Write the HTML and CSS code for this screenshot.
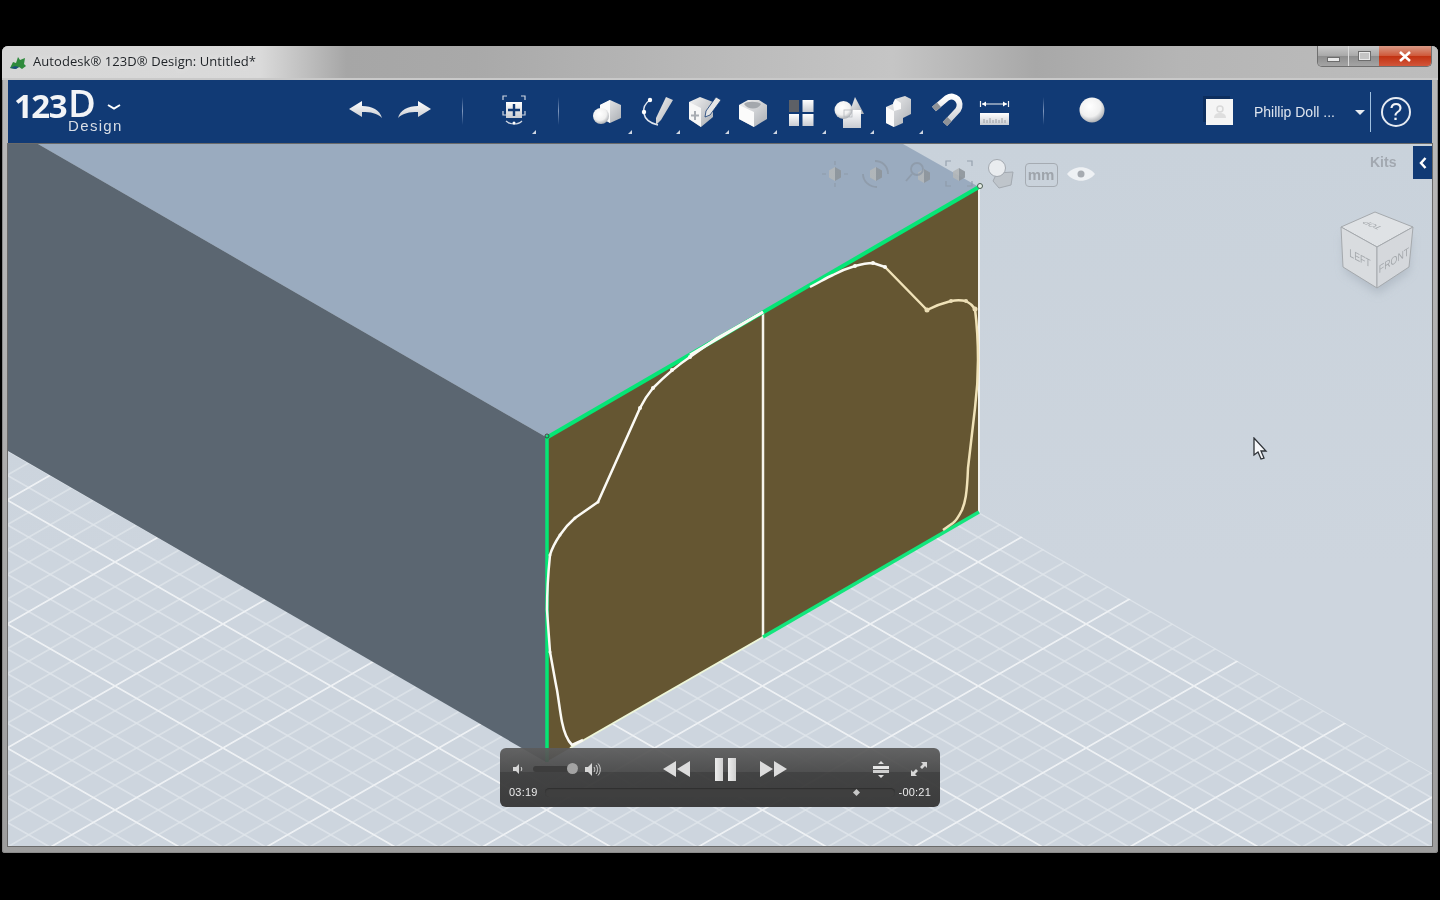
FILE: index.html
```html
<!DOCTYPE html>
<html lang="en">
<head>
    <meta charset="UTF-8">
    <meta name="viewport" content="width=device-width, initial-scale=1.0">
    <title>Autodesk 123D Design</title>
    <link rel="stylesheet" href="styles.css">
</head>
<body>

    <!-- shared gradients for the toolbar icons -->
    <svg class="defs" aria-hidden="true">
        <defs>
            <linearGradient id="lit" x1="0" y1="0" x2="0" y2="1">
                <stop offset="0" stop-color="#ffffff"/>
                <stop offset="1" stop-color="#c9ccd2"/>
            </linearGradient>
            <linearGradient id="shade" x1="0" y1="0" x2="1" y2="1">
                <stop offset="0" stop-color="#f4f4f4"/>
                <stop offset="1" stop-color="#a9adb3"/>
            </linearGradient>
            <radialGradient id="ball" cx="0.42" cy="0.35" r="0.7">
                <stop offset="0" stop-color="#ffffff"/>
                <stop offset="0.6" stop-color="#f0f0f0"/>
                <stop offset="1" stop-color="#9fa3a9"/>
            </radialGradient>
            <linearGradient id="hex" x1="0" y1="0" x2="1" y2="0">
                <stop offset="0.5" stop-color="#b3b7b9"/>
                <stop offset="0.5" stop-color="#8e959b"/>
            </linearGradient>
            <filter id="soft" x="-30%" y="-30%" width="160%" height="160%">
                <feGaussianBlur stdDeviation="5"/>
            </filter>
            <pattern id="floor" width="100" height="100" patternUnits="userSpaceOnUse" patternTransform="matrix(1.079 .62 1.079 -.62 115 562)">
                <path d="M20 0V100M40 0V100M60 0V100M80 0V100M0 20H100M0 40H100M0 60H100M0 80H100" stroke="#e6ebef" stroke-opacity=".8" stroke-width="1.100" fill="none"/>
                <path d="M0 0H100M0 100H100M0 0V100M100 0V100" stroke="#eef1f4" stroke-width="1.600" fill="none"/>
            </pattern>
        </defs>
    </svg>

    <div class="window">
        <div class="titlebar">
            <svg class="app-icon" width="18" height="16" viewBox="0 0 18 16">
                <path d="M1 14l3-6 3 1 2-6 2 3 5-2-1 6 2 2-4 3-3-2-4 2z" fill="#2f8a3c"/>
                <path d="M1 14l5-2 4 1-3 2z" fill="#1d4f7d"/>
            </svg>
            <span class="app-title">Autodesk® 123D® Design: Untitled*</span>
            <div class="win-buttons">
                <div class="win-btn win-min"><span class="min-glyph"></span></div>
                <div class="win-btn win-max"><span class="max-glyph"></span></div>
                <div class="win-btn win-close">
                    <svg width="14" height="11" viewBox="0 0 14 11"><path d="M2 1l10 9M12 1L2 10" stroke="#fff" stroke-width="2.6" fill="none"/></svg>
                </div>
            </div>
        </div>

        <div class="toolbar">
            <div class="logo">
                <span class="logo-num">123</span>
                <div class="logo-right">
                    <div class="logo-top">
                        <span class="logo-d">D</span>
                        <svg class="logo-chevron" width="16" height="8" viewBox="0 0 16 8"><path d="M2 2l6 3.5L14 2" stroke="#fff" stroke-width="2" fill="none"/></svg>
                    </div>
                    <span class="logo-sub">Design</span>
                </div>
            </div>

            <div class="tool history first-history">
                <svg width="36" height="24" viewBox="0 0 36 24"><path d="M1 11L14 3v5c10 0 18 4 20 12-5-5-11-6-20-6v5z" fill="url(#lit)"/></svg>
            </div>
            <div class="tool history">
                <svg width="36" height="24" viewBox="0 0 36 24"><path d="M35 11L22 3v5C12 8 4 12 2 20c5-5 11-6 20-6v5z" fill="url(#lit)"/></svg>
            </div>
            <span class="sep sep-a"></span>

            <div class="tool select-tool more">
                <svg width="36" height="36" viewBox="0 0 36 36">
                    <path d="M9 8V4h4M27 4h4v4M9 19v4h3M31 19v4h-3" stroke="#cfd6e2" stroke-width="1.2" fill="none"/>
                    <path d="M12 10h16v16H12z" fill="url(#lit)"/>
                    <path d="M20 12v12M14 18h12" stroke="#123a74" stroke-width="2.4"/>
                    <path d="M12 29c4 4 12 4 16 0" stroke="#cfd6e2" stroke-width="1.2" fill="none"/>
                    <circle cx="20" cy="31" r="1.5" fill="#fff"/>
                </svg>
            </div>
            <span class="sep sep-b"></span>

            <div class="tools">
                <div class="tool more">
                    <svg width="36" height="36" viewBox="0 0 36 36">
                        <path d="M21 8l11 5v13l-11 5-10-6V13z" fill="url(#shade)"/>
                        <path d="M11 13l10-5 0 23-10-6z" fill="#fafafa"/>
                        <circle cx="12" cy="24" r="8" fill="url(#ball)"/>
                    </svg>
                </div>
                <div class="tool more">
                    <svg width="36" height="36" viewBox="0 0 36 36">
                        <path d="M12 8C3 14 2 29 20 33" stroke="#dfe6f0" stroke-width="1.5" fill="none"/>
                        <circle cx="12" cy="8" r="2.2" fill="#fff"/>
                        <circle cx="6" cy="20" r="2.2" fill="#fff"/>
                        <path d="M28 5l7 3-12 20-5 5 0-7z" fill="url(#shade)"/>
                    </svg>
                </div>
                <div class="tool more">
                    <svg width="36" height="36" viewBox="0 0 36 36">
                        <path d="M3 10L14 5l13 5v15l-12 10-12-8z" fill="url(#shade)"/>
                        <path d="M3 10l12 6v19l-12-8z" fill="#f7f7f7"/>
                        <path d="M9 19v9M5 23.5h8" stroke="#a9adb3" stroke-width="2"/>
                        <path d="M30 5l5 3-11 15-5 2 1-6z" fill="#e6e6e6" stroke="#123a74" stroke-width=".8"/>
                    </svg>
                </div>
                <div class="tool more">
                    <svg width="36" height="36" viewBox="0 0 36 36">
                        <path d="M4 13l9-5h11l8 5v14l-13 8-15-8z" fill="url(#shade)"/>
                        <path d="M4 13l15 7v15L4 27z" fill="#fbfbfb"/>
                        <path d="M9 12c2-3 14-3 17 0-3 6-13 6-17 0z" fill="#a4a8ad"/>
                    </svg>
                </div>
                <div class="tool more">
                    <svg width="36" height="36" viewBox="0 0 36 36">
                        <rect x="6" y="8" width="10" height="12" fill="#5d6066"/>
                        <rect x="19.5" y="8" width="11" height="12" fill="url(#lit)"/>
                        <rect x="6" y="22" width="10" height="12" fill="url(#lit)"/>
                        <rect x="19.5" y="22" width="11" height="12" fill="url(#lit)"/>
                    </svg>
                </div>
                <div class="tool more">
                    <svg width="36" height="36" viewBox="0 0 36 36">
                        <path d="M23 5l9 17H17z" fill="url(#shade)"/>
                        <rect x="11" y="18" width="18" height="18" fill="url(#lit)"/>
                        <circle cx="11.5" cy="18" r="9" fill="url(#ball)"/>
                        <rect x="12" y="18" width="8" height="7" fill="none" stroke="#b5b8bd" stroke-width=".8"/>
                    </svg>
                </div>
                <div class="tool more">
                    <svg width="36" height="36" viewBox="0 0 36 36">
                        <path d="M6 15l9-4V7l10-3 6 3v15l-8 4v5l-9 4-8-4z" fill="url(#shade)"/>
                        <path d="M6 15l8 4v16l-8-4zM15 7l6 4v6l-7 2-1-8z" fill="#fbfbfb"/>
                    </svg>
                </div>
                <div class="tool">
                    <svg width="36" height="36" viewBox="0 0 36 36">
                        <g transform="translate(-2 0)">
                            <path d="M7 17L20 6c8-5 16 4 11 12L18 32" stroke="url(#lit)" stroke-width="6" fill="none"/>
                            <path d="M7 17l5-4.200M18 32l4.500-4.900" stroke="#8f9297" stroke-width="6" fill="none"/>
                        </g>
                    </svg>
                </div>
                <div class="tool">
                    <svg width="36" height="36" viewBox="0 0 36 36">
                        <path d="M3.500 9v6M31.500 9v6M5 12h25" stroke="#f2f2f2" stroke-width="1.200" fill="none"/>
                        <path d="M5 12l4-2.500v5zM30 12l-4-2.500v5z" fill="#fff"/>
                        <rect x="3" y="21" width="29" height="12" fill="url(#lit)"/>
                        <path d="M7 31v-4M10 31v-3M13 31v-5M16 31v-3M19 31v-4M22 31v-3M25 31v-5M28 31v-3" stroke="#8d9096" stroke-width=".8"/>
                    </svg>
                </div>
            </div>
            <span class="sep sep-c"></span>

            <div class="tool material">
                <svg width="36" height="36" viewBox="0 0 36 36"><circle cx="18" cy="18" r="12.500" fill="url(#ball)"/></svg>
            </div>

            <div class="account">
                <div class="avatar">
                    <svg width="18" height="18" viewBox="0 0 18 18">
                        <circle cx="9" cy="6" r="3" fill="none" stroke="#d9d9d9" stroke-width="1.500"/>
                        <path d="M3 15c0-4 3-5 6-5s6 1 6 5z" fill="#dedede"/>
                    </svg>
                </div>
                <span class="user-name">Phillip Doll ...</span>
                <span class="caret"></span>
                <span class="sep-user"></span>
                <div class="help">?</div>
            </div>
        </div>

        <div class="viewport">
            <svg class="scene" viewBox="8 144 1424 703" width="1424" height="703">
                <path d="M8 451L546 762 979 512 1432 773V847H8z" fill="url(#floor)"/>
                <path d="M38 144L546 437 979 187 903 144z" fill="#9aabbf"/>
                <path d="M8 144H38L546 437V762L8 451z" fill="#5b6671"/>
                <path d="M546 437L979 187V512L546 762z" fill="#655632"/>

                <path d="M979 187V512" stroke="#f2f2ee" stroke-width="2" fill="none"/>
                <path d="M763 312V637" stroke="#f7f5ec" stroke-width="2.500" fill="none"/>
                <path d="M763 637L570 748" stroke="#eef6d8" stroke-width="2" fill="none"/>
                <path d="M763 637L979 512" stroke="#12e67c" stroke-width="3.500" fill="none"/>
                <path d="M546 438L979 187" stroke="#05e676" stroke-width="4" fill="none"/>
                <path d="M547 437V762" stroke="#05e676" stroke-width="3.500" fill="none"/>
                <path d="M763 312L690 355" stroke="#fbfbf6" stroke-width="3" fill="none"/>

                <path class="curve" d="M763 312L717 338 690 357C678 365 665 376 653 388 648 394 644 400 640 408L598 502 575 518C568 524 564 529 560 535 556 541 552 548 550 555 548 575 547 592 547 610L550 652C553 668 555 680 557 690 559 702 560 712 562 722 564 732 567 740 572 745L583 740"/>
                <path class="curve" d="M810 287C820 282 826 278 833 275 842 270 848 268 855 266 862 264 868 263 873 263L885 267"/>
                <path class="curve curve-cream" d="M885 267L927 310C935 306 943 303 951 301 956 300 961 300 966 301 970 303 973 306 975 309 977 325 978 342 978 360 978 376 977 392 975 408L968 468C967 495 965 503 962 510 959 516 957 520 953 523L943 530"/>
                <g class="nodes">
                    <circle cx="690" cy="357" r="2"/><circle cx="672" cy="370" r="2"/><circle cx="653" cy="388" r="2"/>
                    <circle cx="640" cy="408" r="2"/><circle cx="598" cy="502" r="1.500"/><circle cx="575" cy="518" r="1.500"/>
                    <circle cx="560" cy="535" r="1.500"/><circle cx="550" cy="555" r="1.500"/><circle cx="550" cy="652" r="1.500"/>
                    <circle cx="855" cy="266" r="2"/><circle cx="873" cy="263" r="2"/><circle cx="885" cy="267" r="2"/>
                </g>
                <g class="nodes nodes-cream">
                    <circle cx="927" cy="310" r="2.500"/><circle cx="951" cy="301" r="2"/><circle cx="966" cy="301" r="2"/><circle cx="975" cy="309" r="2.500"/>
                </g>
                <circle cx="547" cy="436" r="2" fill="none" stroke="#3b4a3f"/>
                <circle cx="980" cy="186" r="2.500" fill="#e8efe8" stroke="#4b5c50"/>
            </svg>

            <div class="nav-tools">
                <div class="nav-icon">
                    <svg width="32" height="32" viewBox="0 0 32 32">
                        <path class="hexa" d="M16 9l6 3.500v7L16 23l-6-3.500v-7z"/>
                        <path class="nav-line" d="M16 3v4M16 25v4M3 16h4M25 16h4"/>
                    </svg>
                </div>
                <div class="nav-icon">
                    <svg width="32" height="32" viewBox="0 0 32 32">
                        <path class="hexa" d="M16 9l6 3.500v7L16 23l-6-3.500v-7z"/>
                        <path class="nav-line nav-wide" d="M15 3c7 0 13 5 13 13M17 29C9 29 3 23 3 16"/>
                    </svg>
                </div>
                <div class="nav-icon">
                    <svg width="32" height="32" viewBox="0 0 32 32">
                        <path class="hexa" d="M22 11l6 3.500v7L22 25l-6-3.500v-7z"/>
                        <circle class="nav-line nav-wide" cx="15" cy="11" r="6"/>
                        <path class="nav-line nav-wide" d="M10 16l-6 7"/>
                    </svg>
                </div>
                <div class="nav-icon">
                    <svg width="32" height="32" viewBox="0 0 32 32">
                        <path class="hexa" d="M16 10l6 3.500v6L16 23l-6-3.500v-6z"/>
                        <path class="nav-line" d="M3 8V3h5M24 3h5v5M3 23v5h5M29 23v5h-5"/>
                    </svg>
                </div>
                <div class="nav-icon">
                    <svg width="32" height="32" viewBox="0 0 32 32">
                        <path d="M12 15l16-1-2 13-12 3-6-7z" fill="#bfc5cb" stroke="#a3a9b0" stroke-width="1"/>
                        <circle cx="12" cy="10" r="8.500" fill="#e9ecef" stroke="#a3a9b0" stroke-width="1"/>
                    </svg>
                </div>
                <div class="mm-box">mm</div>
                <div class="eye">
                    <svg width="30" height="18" viewBox="0 0 30 18">
                        <path d="M1 9c7-9 21-9 28 0-7 9-21 9-28 0z" fill="#eef1f4"/>
                        <circle cx="15" cy="9" r="3.500" fill="#a6abb1"/>
                    </svg>
                </div>
            </div>

            <span class="kits">Kits</span>
            <div class="kits-tab">
                <svg width="10" height="14" viewBox="0 0 10 14"><path d="M7.500 2L3 7l4.500 5" stroke="#fff" stroke-width="2.500" fill="none"/></svg>
            </div>

            <svg class="viewcube" width="100" height="100" viewBox="0 0 100 100">
                <path d="M16 30L84 30 82 66 51 88 18 66z" fill="#a9b3be" opacity=".7" filter="url(#soft)"/>
                <path d="M48 6L86 21 50 41 14 21z" fill="#dfe2e5" stroke="#a5a9ad"/>
                <path d="M14 21L16 61 50 82 50 41z" fill="#d9dcdf" stroke="#a5a9ad"/>
                <path d="M86 21L82 61 50 82 50 41z" fill="#d5d8dc" stroke="#a5a9ad"/>
                <text class="cube-label" transform="matrix(-.72 -.3 .72 -.3 48 18)">TOP</text>
                <text class="cube-label" transform="matrix(.8 .42 0 1 33 56)">LEFT</text>
                <text class="cube-label" transform="matrix(.8 -.5 0 1 67 58)">FRONT</text>
            </svg>

            <svg class="cursor" width="18" height="24" viewBox="0 0 18 24">
                <path d="M2 1v17l4-3 3 7 3-1-3-7h5z" fill="#f7f8fa" stroke="#2f3338" stroke-width="1.300"/>
            </svg>

            <div class="player">
                <div class="player-top">
                    <div class="volume">
                        <svg width="12" height="12" viewBox="0 0 12 12"><path d="M1 4h3l3-3v10L4 8H1z" fill="#d6d6d6"/><path d="M9 4c1 1 1 3 0 4" stroke="#d6d6d6" fill="none"/></svg>
                        <div class="volume-track"><span class="volume-knob"></span></div>
                        <svg width="17" height="15" viewBox="0 0 17 15"><path d="M1 5h3l4-4v13l-4-4H1z" fill="#d6d6d6"/><path d="M10 5c1 1.500 1 3.500 0 5M12 3c2 2.500 2 6.500 0 9M14 1.500c3 3.500 3 8.500 0 12" stroke="#d6d6d6" fill="none"/></svg>
                    </div>
                    <div class="transport">
                        <svg width="27" height="16" viewBox="0 0 27 16"><path d="M0 8l13-8v16zM14 8l13-8v16z" fill="#dcdcdc"/></svg>
                        <div class="pause"><span></span><span></span></div>
                        <svg width="27" height="16" viewBox="0 0 27 16"><path d="M0 0l13 8-13 8zM14 0l13 8-13 8z" fill="#dcdcdc"/></svg>
                    </div>
                    <div class="view-btns">
                        <svg width="16" height="17" viewBox="0 0 16 17"><path d="M8 0l3 3H5zM8 17l-3-3h6z" fill="#dcdcdc"/><rect x="0" y="5" width="16" height="3" fill="#e6e6e6"/><rect x="0" y="9" width="16" height="3" fill="#cfcfcf"/></svg>
                        <svg width="16" height="14" viewBox="0 0 16 14"><path d="M16 0v6l-2-2-3 3-2-2 3-3-2-2zM0 14V8l2 2 3-3 2 2-3 3 2 2z" fill="#d6d6d6"/></svg>
                    </div>
                </div>
                <div class="player-bottom">
                    <span class="time">03:19</span>
                    <div class="progress"><span class="progress-mark"></span></div>
                    <span class="time">-00:21</span>
                </div>
            </div>
        </div>
    </div>

</body>
</html>
```

FILE: styles.css
```css
* {
    box-sizing: border-box;
}

body {
    margin: 0;
    height: 900px;
    overflow: hidden;
    background-color: #000;
    font-family: "Liberation Sans", Arial, sans-serif;
}

.defs {
    position: absolute;
    width: 0;
    height: 0;
}

.window {
    display: flex;
    flex-direction: column;
    width: 1436px;
    height: 807px;
    margin: 46px 2px 0;
    padding: 0 6px 7px;
    border-radius: 6px 6px 3px 3px;
    background: linear-gradient(180deg, #b9b9b9 0, #b4b4b4 30%, #9d9d9d 100%);
    box-shadow: inset 0 0 0 1px #8b8b8b;
    filter: blur(.4px);
}

/* title bar */
.titlebar {
    display: flex;
    align-items: center;
    height: 34px;
    margin: 0 -6px;
    padding: 0 6px 2px 7px;
    border-radius: 6px 6px 0 0;
    background: linear-gradient(90deg, #d6d6d6 0, #dadada 18%, #a6a6a6 24%, #a9a9a9 33%, #bababa 50%, #c5c5c5 62%, #a8a8a8 72%, #b5b5b5 82%, #bdbdbd 100%);
    border-bottom: 2px solid #c9c9c9;
}

.app-icon {
    flex-shrink: 0;
    margin-top: 2px;
}

.app-title {
    margin-left: 6px;
    font-family: "Open Sans", sans-serif;
    font-size: 13px;
    letter-spacing: .07px;
    color: #1f2327;
    text-shadow: 0 0 6px #eee;
}

.win-buttons {
    display: flex;
    align-self: flex-start;
    height: 21px;
    margin-left: auto;
    border: 1px solid #6f6f6f;
    border-top: 0;
    border-radius: 0 0 5px 5px;
    overflow: hidden;
}

.win-btn {
    display: flex;
    align-items: center;
    justify-content: center;
    height: 100%;
    background: linear-gradient(180deg, #c9c9c9, #a8a8a8 50%, #8e8e8e 52%, #a4a4a4);
}

.win-min {
    width: 31px;
    border-right: 1px solid #dcdcdc;
}

.win-max {
    width: 30px;
}

.win-close {
    width: 52px;
    background: linear-gradient(180deg, #d99a86, #cf5a3c 48%, #c23312 52%, #d2553a);
}

.min-glyph {
    width: 13px;
    height: 5px;
    margin-top: 6px;
    background: #e9e9e9;
    border: 1px solid #6c6c6c;
}

.max-glyph {
    width: 13px;
    height: 10px;
    background: #c4c4c4;
    border: 2px solid #e9e9e9;
    outline: 1px solid #6c6c6c;
    outline-offset: -1px;
}

/* blue toolbar */
.toolbar {
    display: flex;
    align-items: center;
    flex-shrink: 0;
    height: 64px;
    background-color: #113a75;
}

.logo {
    display: flex;
    width: 110px;
    height: 50px;
    margin-left: 6px;
    color: #f2f4f7;
    font-family: "Open Sans", sans-serif;
}

.logo-num {
    height: 42px;
    margin-top: -2px;
    font-size: 33px;
    font-weight: 700;
    line-height: 42px;
    letter-spacing: -1.500px;
}

.logo-right {
    display: flex;
    flex-direction: column;
    margin-left: 2px;
}

.logo-top {
    display: flex;
    align-items: center;
    height: 31px;
}

.logo-d {
    display: block;
    height: 31px;
    font-size: 38px;
    font-weight: 600;
    line-height: 31px;
}

.logo-chevron {
    margin: 9px 0 0 10px;
}

.logo-sub {
    display: block;
    height: 16px;
    font-family: "Liberation Sans", sans-serif;
    font-size: 15px;
    line-height: 16px;
    letter-spacing: 1.300px;
    color: #d9dee6;
}

.tool {
    position: relative;
    display: flex;
    align-items: center;
    justify-content: center;
    flex-shrink: 0;
    width: 48.5px;
    height: 36px;
    margin-bottom: 4px;
}

.history {
    width: 48px;
}

.first-history {
    margin-left: 218px;
}

/* little corner triangle on tools with a flyout */
.more::after {
    content: "";
    position: absolute;
    right: 0;
    bottom: -6px;
    border-left: 4px solid transparent;
    border-bottom: 4px solid #cfd6e2;
}

.sep {
    width: 1px;
    height: 28px;
    flex-shrink: 0;
    background: linear-gradient(180deg, #113a75, #7f97bd 50%, #113a75);
}

.sep-a {
    margin: 0 25px 2px 24px;
}

.select-tool {
    width: 48px;
}

.sep-b {
    margin: 0 24px 2px 22px;
}

.tools {
    display: flex;
    flex-shrink: 0;
}

.sep-c {
    margin: 0 24px 2px 23px;
}

.material {
    width: 48px;
}

.account {
    display: flex;
    align-items: center;
    margin-left: auto;
    padding-right: 21px;
}

.avatar {
    display: flex;
    align-items: center;
    justify-content: center;
    width: 27px;
    height: 26px;
    background-color: #f5f5f5;
    box-shadow: -3px -3px 0 #0d2e5e;
}

.user-name {
    width: 101px;
    margin-left: 21px;
    font-size: 14px;
    color: #dfe5ee;
}

.caret {
    width: 0;
    height: 0;
    border-left: 5px solid transparent;
    border-right: 5px solid transparent;
    border-top: 5px solid #e8ecf2;
}

.sep-user {
    width: 1px;
    height: 40px;
    margin: 0 10px 0 5px;
    background-color: #9fc0e0;
}

.help {
    width: 30px;
    height: 30px;
    border: 2px solid #e6ebf2;
    border-radius: 50%;
    color: #f2f4f8;
    font-size: 23px;
    line-height: 26px;
    text-align: center;
}

/* 3D viewport */
.viewport {
    position: relative;
    flex: 1;
    overflow: hidden;
    background: linear-gradient(180deg, #c9d2db 0, #cdd5de 60%);
    box-shadow: 0 0 0 1px #6a6a6a;
}

.scene {
    position: absolute;
    left: 0;
    top: 0;
    display: block;
}

.curve {
    fill: none;
    stroke: #fbfaf4;
    stroke-width: 2.5;
    stroke-linejoin: round;
}

.curve-cream {
    stroke: #f0e2b8;
}

.nodes {
    fill: #fbfaf4;
}

.nodes-cream {
    fill: #eadcb4;
}

.nav-tools {
    position: absolute;
    left: 806px;
    top: 14px;
    display: flex;
    align-items: center;
}

.nav-icon {
    display: flex;
    justify-content: center;
    width: 41.500px;
    height: 32px;
}

.hexa {
    fill: url(#hex);
    opacity: .9;
}

.nav-line {
    fill: none;
    stroke: #8d99a7;
    stroke-width: 1.200;
    opacity: .85;
}

.nav-wide {
    stroke-width: 1.800;
}

.mm-box {
    width: 33px;
    height: 24px;
    margin: 2px 0 0 3px;
    border: 1.500px solid #a5abb2;
    border-radius: 4px;
    color: #9ea4ab;
    font-size: 15px;
    font-weight: 700;
    line-height: 22px;
    text-align: center;
}

.eye {
    display: flex;
    margin-left: 8px;
}

.kits {
    position: absolute;
    left: 1362px;
    top: 10px;
    color: #a2a8b0;
    font-size: 14px;
    font-weight: 700;
}

.kits-tab {
    position: absolute;
    right: 0;
    top: 2px;
    display: flex;
    align-items: center;
    justify-content: center;
    width: 19px;
    height: 33px;
    background-color: #113a75;
}

.viewcube {
    position: absolute;
    left: 1319px;
    top: 62px;
}

.cube-label {
    fill: #a3a7ab;
    font-size: 11px;
    font-family: "Liberation Sans", sans-serif;
    text-anchor: middle;
}

.cursor {
    position: absolute;
    left: 1244px;
    top: 293px;
}

/* movie player controls over the scene */
.player {
    position: absolute;
    left: 492px;
    top: 604px;
    width: 440px;
    height: 59px;
    padding: 8px 9px 0;
    border-radius: 6px;
    background: linear-gradient(180deg, rgba(92, 92, 92, .94) 0, rgba(72, 72, 72, .94) 40%, rgba(58, 58, 58, .94) 41%, rgba(54, 54, 54, .96) 100%);
}

.player-top {
    display: grid;
    grid-template-columns: 1fr auto 1fr;
    align-items: center;
    height: 26px;
}

.volume {
    display: flex;
    align-items: center;
    padding-left: 3px;
}

.volume-track {
    position: relative;
    width: 45px;
    height: 6px;
    margin: 0 6px 0 9px;
    border-radius: 3px;
    background-color: #3d3d3d;
}

.volume-knob {
    position: absolute;
    right: 0;
    top: -3px;
    width: 11px;
    height: 11px;
    border-radius: 50%;
    background-color: #a3a3a3;
}

.transport {
    display: flex;
    align-items: center;
    gap: 24.500px;
    margin-left: 10px;
}

.pause {
    display: flex;
    gap: 5px;
}

.pause span {
    width: 8px;
    height: 23px;
    background: linear-gradient(90deg, #ededed, #cfcfcf);
}

.view-btns {
    display: flex;
    align-items: center;
    justify-content: flex-end;
    gap: 22px;
    padding-right: 4px;
}

.player-bottom {
    display: flex;
    align-items: center;
    margin-top: 4px;
}

.time {
    color: #eaeaea;
    font-size: 11px;
    letter-spacing: .2px;
}

.progress {
    position: relative;
    flex: 1;
    height: 9px;
    margin: 0 4px 0 7px;
    border-radius: 5px;
    background-color: #3f3f3f;
    box-shadow: inset 0 1px 1px #2f2f2f;
}

.progress-mark {
    position: absolute;
    right: 36px;
    top: 2px;
    width: 5px;
    height: 5px;
    background-color: #c8c8c8;
    transform: rotate(45deg);
}
```
